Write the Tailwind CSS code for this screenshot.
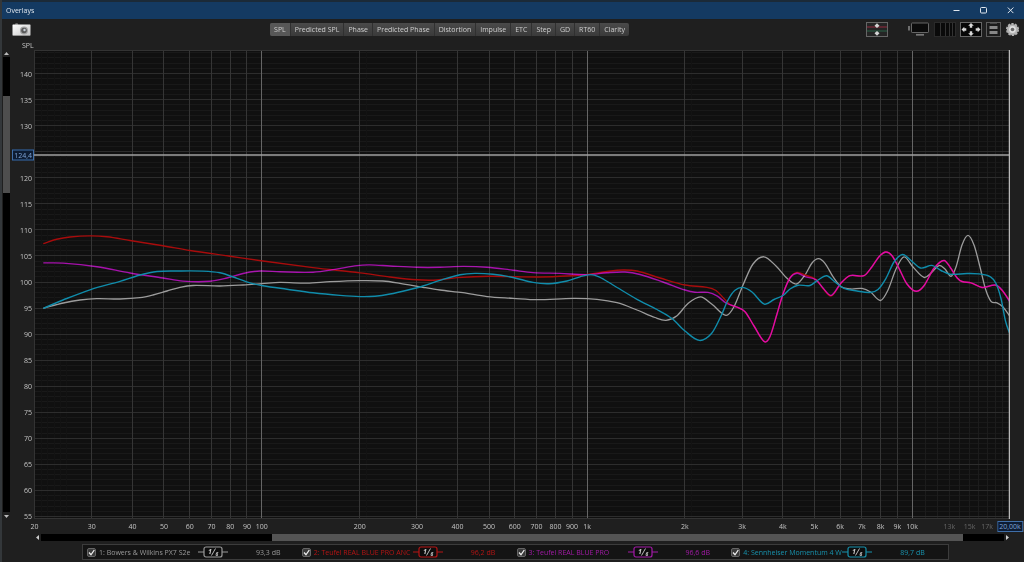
<!DOCTYPE html>
<html lang="en">
<head>
<meta charset="utf-8">
<title>Overlays</title>
<script src="https://cdn.jsdelivr.net/npm/@tailwindcss/browser@4"></script>
</head>
<body class="flex h-screen flex-col overflow-hidden bg-[#1f1f1f] border-l-2 border-l-[#33373a] font-['Open_Sans','Noto_Sans',sans-serif] text-[7px] leading-none text-[#c4c4c4]">
<div class="h-0.5 shrink-0 bg-[#1b2a38]"></div>
<header class="flex h-[17px] shrink-0 items-center justify-between bg-[#143a62] pl-1 pr-2 text-[#dfe6ee]">
  <h1>Overlays</h1>
  <div class="flex items-center gap-4">
    <button aria-label="Minimize" class="size-[11px]"><svg viewBox="0 0 11 11" fill="none" stroke="#dfe6ee"><path d="M2.5 5.5h6"/></svg></button>
    <button aria-label="Maximize" class="size-[11px]"><svg viewBox="0 0 11 11" fill="none" stroke="#dfe6ee"><rect x="2.5" y="2.5" width="6" height="5.5" rx="1"/></svg></button>
    <button aria-label="Close" class="size-[11px]"><svg viewBox="0 0 11 11" fill="none" stroke="#dfe6ee"><path d="M2.8 2.5l5.6 5.6M8.4 2.5L2.8 8.1"/></svg></button>
  </div>
</header>

<div class="grid h-[21px] shrink-0 grid-cols-[25.6%_auto_1fr] items-center pl-2.5 pr-1">
  <button aria-label="Capture image" class="w-[19px]">
    <svg viewBox="0 0 19 13"><defs><linearGradient id="cam" x1="0" y1="0" x2="1" y2="1"><stop offset="0" stop-color="#fff"/><stop offset="1" stop-color="#c6c6c6"/></linearGradient></defs><path d="M3 1.5q0-1 1-1h1.200q1 0 1 1z" fill="#aaa"/><rect x=".5" y="1.500" width="18" height="11" rx=".6" fill="url(#cam)"/><path d="M7 3h5" stroke="#eee"/><circle cx="12" cy="7.500" r="4" fill="#a4a4a4"/><circle cx="12" cy="7.500" r="2.800" fill="#5a5a5a"/><circle cx="12.500" cy="7" r="1.200" fill="#c8d0d8"/><path d="M1 12.500h17" stroke="#999" stroke-width=".8"/></svg>
  </button>
  <nav class="flex h-[13px] items-stretch divide-x divide-[#303030] overflow-hidden rounded-xs bg-linear-to-b from-[#4a4a4a] to-[#3a3a3a] text-[#cfcfcf]">
    <button class="bg-[#575757] px-1">SPL</button>
    <button class="px-1">Predicted SPL</button>
    <button class="px-1">Phase</button>
    <button class="px-1">Predicted Phase</button>
    <button class="px-1">Distortion</button>
    <button class="px-1">Impulse</button>
    <button class="px-1">ETC</button>
    <button class="px-1">Step</button>
    <button class="px-1">GD</button>
    <button class="px-1">RT60</button>
    <button class="px-1">Clarity</button>
  </nav>
  <div class="flex items-center justify-end gap-1">
    <button aria-label="Separate traces" class="mr-4 w-[22px]"><svg viewBox="0 0 22 15"><rect x=".5" y=".5" width="21" height="14" fill="#252525" stroke="#666"/><path d="M1 5h20" stroke="#7a2838" stroke-width="1.300"/><path d="M1 9h20" stroke="#28543f" stroke-width="1.300"/><path d="M11 1.200l2.500 2.600L11 6 8.500 3.800zM11 13.800l2.500-2.600L11 9l-2.500 2.200z" fill="#d4d4d4"/></svg></button>
    <button aria-label="Show on monitor" class="w-[22px]"><svg viewBox="0 0 22 15"><rect x="3.500" y="1" width="17" height="9.500" rx=".6" fill="#0b0b0b" stroke="#666"/><path d="M1 4v4.500" stroke="#777" stroke-width="1.800"/><path d="M8 12.800h8" stroke="#777" stroke-width="1.700"/></svg></button>
    <button aria-label="Frequency axis" class="w-[22px]"><svg viewBox="0 0 22 15"><rect x=".5" y=".5" width="21" height="14" fill="#0a0a0a" stroke="#2a2a2a"/><path d="M6.500 1v13M11.500 1v13M15.500 1v13M18.500 1v13" stroke="#333"/></svg></button>
    <button aria-label="Fit graph" class="w-[22px]"><svg viewBox="0 0 22 15"><rect x=".5" y=".5" width="21" height="14" fill="#060606" stroke="#666"/><path d="M11 1l2.800 2.800h-1.600v2h-2.400v-2H8.200zM11 14l2.800-2.800h-1.600v-2h-2.400v2H8.200zM1.500 7.500l2.800-2.800v1.600h2v2.400h-2v1.600zM20.500 7.500l-2.800-2.800v1.600h-2v2.400h2v1.600z" fill="#d8d8d8"/></svg></button>
    <button aria-label="Graph limits" class="w-[15px]"><svg viewBox="0 0 15 15"><rect x=".5" y=".5" width="14" height="14" fill="#1b1b1b" stroke="#5c5c5c"/><path d="M4 1.500h7" stroke="#444"/><rect x="3.500" y="4" width="8" height="3" fill="#888"/><rect x="3.500" y="9" width="8" height="3" fill="#888"/></svg></button>
    <button aria-label="Settings" class="w-[15px]"><svg viewBox="0 0 15 15"><circle cx="7.500" cy="7.500" r="5.600" fill="#b4b4b4"/><circle cx="7.500" cy="7.500" r="5.800" fill="none" stroke="#b4b4b4" stroke-width="1.500" stroke-dasharray="2.300 1.340"/><circle cx="7.500" cy="7.500" r="3.400" fill="#dedede"/><circle cx="7.500" cy="7.500" r="1.800" fill="#666"/></svg></button>
  </div>
</div>

<div class="flex h-2.5 shrink-0 items-center"><span class="ml-5">SPL</span></div>

<main class="flex min-h-0 flex-1 pr-3.5">
  <div class="flex w-[9px] flex-col items-center">
    <svg class="h-[7px] w-[5px] shrink-0" viewBox="0 0 5 7"><path d="M0 5h5L2.500 2z" fill="#bbb"/></svg>
    <div class="flex w-[7px] flex-1 flex-col bg-black"><div class="h-[8.5%]"></div><div class="h-[21.400%] bg-[#4e4e4e]"></div></div>
    <svg class="h-[7px] w-[5px] shrink-0" viewBox="0 0 5 7"><path d="M0 3h5L2.500 6z" fill="#bbb"/></svg>
  </div>
  <div id="levels" class="relative w-[23px]"></div>
  <div class="relative min-w-0 flex-1">
    <svg id="plot" class="block size-full bg-[#101010]" viewBox="34 50 976 469" preserveAspectRatio="none" role="img" aria-label="SPL against frequency"></svg>
  </div>
</main>

<div class="h-[15px] shrink-0 pl-8 pr-3.5"><div id="freqs" class="relative h-full"></div></div>

<div class="flex h-[7px] shrink-0 items-stretch pl-[33px] pr-3.5">
  <svg class="w-1.5" viewBox="0 0 6 7"><path d="M4 1v5L1 3.500z" fill="#ccc"/></svg>
  <div class="flex flex-1 bg-black"><div class="w-[24%]"></div><div class="w-[71.700%] bg-[#545454]"></div></div>
  <svg class="w-1.5" viewBox="0 0 6 7"><path d="M2 1v5l3-2.500z" fill="#ccc"/></svg>
</div>

<footer class="mb-0.5 ml-20 mr-[75px] mt-[3px] h-4 shrink-0 border border-[#3c3c3c] bg-[#141414] pl-1 pr-0.5">
  <ul id="legend" class="grid h-full grid-cols-4"></ul>
</footer>

<script>
const NS = 'http://www.w3.org/2000/svg';
const plot = document.getElementById('plot');
const X = f => 34.5 + 325.2 * Math.log10(f / 20);
const Y = v => 282 + (100 - v) * 5.21;

function path(d, stroke, width, cls) {
  const p = document.createElementNS(NS, 'path');
  p.setAttribute('d', d);
  p.setAttribute('fill', 'none');
  p.setAttribute('stroke', stroke);
  p.setAttribute('stroke-width', width);
  p.setAttribute('vector-effect', 'non-scaling-stroke');
  if (cls) p.setAttribute('class', cls);
  plot.appendChild(p);
}
const crisp = n => Math.floor(n) + 0.5;
const vline = (f, c) => path(`M${crisp(X(f))} 50V519`, c, 1);
const hline = (v, c) => path(`M34 ${crisp(Y(v))}H1010`, c, 1);

// Grid: minor lines first, then 5 dB steps, then frequency lines and decades
for (let v = 55; v <= 144; v++) if (v % 5) hline(v, '#191919');
for (let f = 11000; f < 20000; f += 1000) vline(f, '#1c1c1c');
for (const f of [21, 22, 23, 24, 25, 210, 2100]) vline(f, '#131313');
for (let v = 55; v <= 140; v += 5) hline(v, '#2d2d2d');
for (const d of [10, 100, 1000])
  for (let k = 2; k < 10; k++) if (d * k > 20) vline(d * k, '#353535');
for (const f of [100, 1000, 10000]) vline(f, '#656565');
path('M34 50.500H1010M34.500 50V519M34 518.500H1010', '#333', 1);

// Smooth curve through the samples of a trace
function curve(a) {
  let d = `M${a[0]} ${a[1]}`;
  const n = a.length / 2, p = i => { i = Math.max(0, Math.min(n - 1, i)); return [a[2 * i], a[2 * i + 1]]; };
  const slope = i => { const [x0, y0] = p(i - 1), [x1, y1] = p(i + 1); return (y1 - y0) / (x1 - x0); };
  for (let i = 0; i < n - 1; i++) {
    const [x1, y1] = p(i), [x2, y2] = p(i + 1), h = (x2 - x1) / 3;
    d += `C${x1 + h} ${y1 + h * slope(i)} ${x2 - h} ${y2 - h * slope(i + 1)} ${x2} ${y2}`;
  }
  return d;
}
const px7 = [43.3,308.3, 63.3,303, 80,300, 96.7,298.7, 120,299, 140,297.7, 153,295, 167,291, 180,287.3, 193,285.5, 220,286, 243,285, 262,283.7, 280,282.4, 307,283.2, 330,281.7, 360,280.6, 383,281, 400,283.3, 423,287.3, 440,290, 463,292.7, 487,296.6, 513,298.3, 537,299.7, 573,298.4, 597,299.3, 617,302.7, 637,310, 655,317.5, 666,320.3, 677,315.7, 688,303.5, 700.5,296.9, 712,304.3, 726,315.4, 734,306.7, 743,285, 753,264, 764,256.8, 776,266, 787,278.3, 796.5,284, 805,275, 812,263, 818.5,258.6, 825,263.3, 833,276.7, 841,286.8, 851,289, 862,288.4, 870.5,292, 880.5,300.5, 888,290, 896,269, 904,256.8, 913,267, 924,277.4, 931,273, 939,265.5, 945,269, 951,276.3, 956,267, 962,245, 968,235.4, 974,245, 980,267, 985.5,289, 991,301.3, 997,302.8, 1003,307, 1010,316.5];
const anc = [43.3,243.7, 56.7,239.3, 70,237, 90,235.9, 107,236.8, 130,240.5, 163,245.7, 190,250.5, 230,256.2, 263,261, 313,267.6, 360,272.9, 390,277, 417,279.8, 437,280, 457,277.6, 490,276.2, 517,276.8, 540,277, 567,276, 587,274.5, 607,271.5, 623,270, 637,271, 660,278, 685,285, 707,287.4, 716,290.5, 724,298.5, 730,304.5, 737,307.2, 745,311.7, 754,326, 764.4,341.6, 770,336.5, 777,314, 783,294, 790,277.7, 797,272.4, 805,275, 816,279.5, 823,288.5, 831.3,295.9, 841,283.3, 850,275.7, 864,275.6, 872,266.7, 879,256.7, 885.7,252, 892,255.7, 899,268.3, 907,284, 916,291.3, 924,285.7, 934,268.3, 944,260.5, 951,268.5, 957,277.7, 962,281.5, 971,282.8, 982,287.5, 995.5,285.2, 1002,290.5, 1010,300.5];
const rbp = [43.3,262.9, 63,263.1, 97,266.7, 130,273, 163,278, 183,281.1, 210,281.3, 227,278, 243,273.5, 260,271, 280,271.8, 313,272.2, 335,269.4, 357,265.6, 370,264.9, 390,266, 417,267.3, 440,267.3, 463,266.4, 487,267.2, 513,270.2, 533,272.6, 560,273.4, 587,274.6, 607,272.7, 625,272, 640,274.5, 663,282, 685,290, 695,292.3, 708,292.4, 717,295.8, 726,303, 737,307.2, 745,311.7, 754,326, 764.4,341.6, 770,336.5, 777,314, 783,294, 790,278, 797,273.2, 805,276.7, 816,279.8, 823,288, 831.3,295.3, 841,283, 850,275.6, 864,275.6, 872,266.7, 879,256.7, 885.7,252, 892,255.7, 899,268.3, 907,284, 916,291.3, 924,285.7, 934,268.3, 944,260.5, 951,268.5, 957,277.7, 962,281.5, 971,282.8, 982,287.5, 995.5,285, 1002,290, 1010,302];
const m4w = [43.3,308.3, 63,300, 90,289.8, 120,281.3, 140,275, 157,271.5, 177,271, 203,271.1, 220,272.8, 237,278.3, 250,282.8, 263,285.7, 287,289.2, 313,292.8, 340,295.4, 360,296.6, 375,296.2, 390,294, 407,290.2, 423,286, 440,280.3, 460,274.7, 475,273.4, 493,274.3, 513,277.5, 533,282.4, 549,283.7, 567,281, 580,276.8, 590,274.6, 599,276.8, 613,285, 637,299.3, 657,309.5, 672,318.5, 685,331, 699.3,340.4, 711.5,333.5, 721,316, 728,300, 735,290.3, 742.7,287.4, 752,292, 764.3,304.1, 774,299.5, 783,295.5, 790,289, 798,285.2, 810,285.5, 818,280, 826.5,275.8, 835,282, 844,288.4, 857,291, 870,292.5, 878,289.5, 886,278.3, 894,262, 902.5,254.5, 911,260.5, 920.5,268, 932,265.4, 941,270.5, 950,274.2, 967,273.5, 979,273.9, 990.5,276.8, 996,283.5, 1001,298.5, 1005.5,321, 1010,334.5];
path(curve(px7), '#9c9c9c', 1.3);
path(curve(anc), '#a80c0c', 1.4);
path(curve(rbp), '#a000a6', 1.4, 'mix-blend-screen');
path(curve(m4w), '#108cab', 1.4);

// Cursor
path('M34 155H1010', '#a0a0a0', 1.500);
path('M1009.500 50V519', '#b8b8b8', 1.500);

// Axis labels
function label(host, text, cls, side, pct) {
  const s = document.createElement('span');
  s.textContent = text;
  s.className = cls;
  s.style[side] = pct + '%';
  host.appendChild(s);
}
const levels = document.getElementById('levels'), freqs = document.getElementById('freqs');
for (let v = 55; v <= 140; v += 5)
  label(levels, v, 'absolute right-0.5 -translate-y-1/2', 'top', (Y(v) - 50) / 4.69);
label(levels, '124,4', 'absolute right-0 -translate-y-1/2 border border-[#3f6ea8] bg-[#0d1c33] px-px py-px text-[#7fa5d8]', 'top', 105 / 4.69);
const ticks = [20,30,40,50,60,70,80,90,100,200,300,400,500,600,700,800,900,1000,2000,3000,4000,5000,6000,7000,8000,9000,10000,13000,15000,17000];
for (const f of ticks)
  label(freqs, f < 1000 ? f : f / 1000 + 'k',
    f > 10000 ? 'absolute top-1 -translate-x-1/2 text-[#666]' : 'absolute top-1 -translate-x-1/2', 'left', (X(f) - 34) / 9.76);
label(freqs, '20,00k', 'absolute top-0.5 -translate-x-1/2 border border-[#3f6ea8] bg-[#0d1c33] px-px py-px text-[#7fa5d8]', 'left', 100);

// Legend
const traces = [
  ['1: Bowers & Wilkins PX7 S2e', '93,3 dB', 'text-[#999]'],
  ['2: Teufel REAL BLUE PRO ANC', '96,2 dB', 'text-[#b51414]'],
  ['3: Teufel REAL BLUE PRO', '96,6 dB', 'text-[#a31aa7]'],
  ['4: Sennheiser Momentum 4 W', '89,7 dB', 'text-[#1792ad]'],
];
document.getElementById('legend').innerHTML = traces.map(([name, value, cls], i) => `
  <li class="grid grid-cols-[12px_98px_32px_1fr] items-center ${cls}">
    <span class="grid size-[9px]">
      <input id="t${i}" type="checkbox" checked class="peer col-start-1 row-start-1 size-[9px] appearance-none rounded-xs border border-[#666] bg-[#3a3a3a]">
      <svg class="pointer-events-none invisible col-start-1 row-start-1 size-[9px] peer-checked:visible" viewBox="0 0 9 9"><path d="M2 4.500l2 2.300L7.300 2" fill="none" stroke="#eee" stroke-width="1.300"/></svg>
    </span>
    <label for="t${i}" class="whitespace-nowrap">${name.replace('&', '&amp;')}</label>
    <button aria-label="Smoothing 1/6" class="w-8"><svg viewBox="0 0 32 12" fill="none" stroke="currentColor"><path d="M1 6h6M25 6h6"/><rect x="7" y="1" width="18" height="10" rx="2" fill="#0d0d0d" stroke-width="1.200"/><g fill="#ccc" stroke="none" font-style="italic" font-weight="bold"><text x="11" y="7.500" font-size="7">1</text><text x="18.500" y="9.500" font-size="5">6</text></g><path d="M18.500 2.500l-4 7" stroke="#ccc" stroke-width=".9"/></svg></button>
    <span class="pl-[27px]">${value}</span>
  </li>`).join('');
</script>
</body>
</html>
